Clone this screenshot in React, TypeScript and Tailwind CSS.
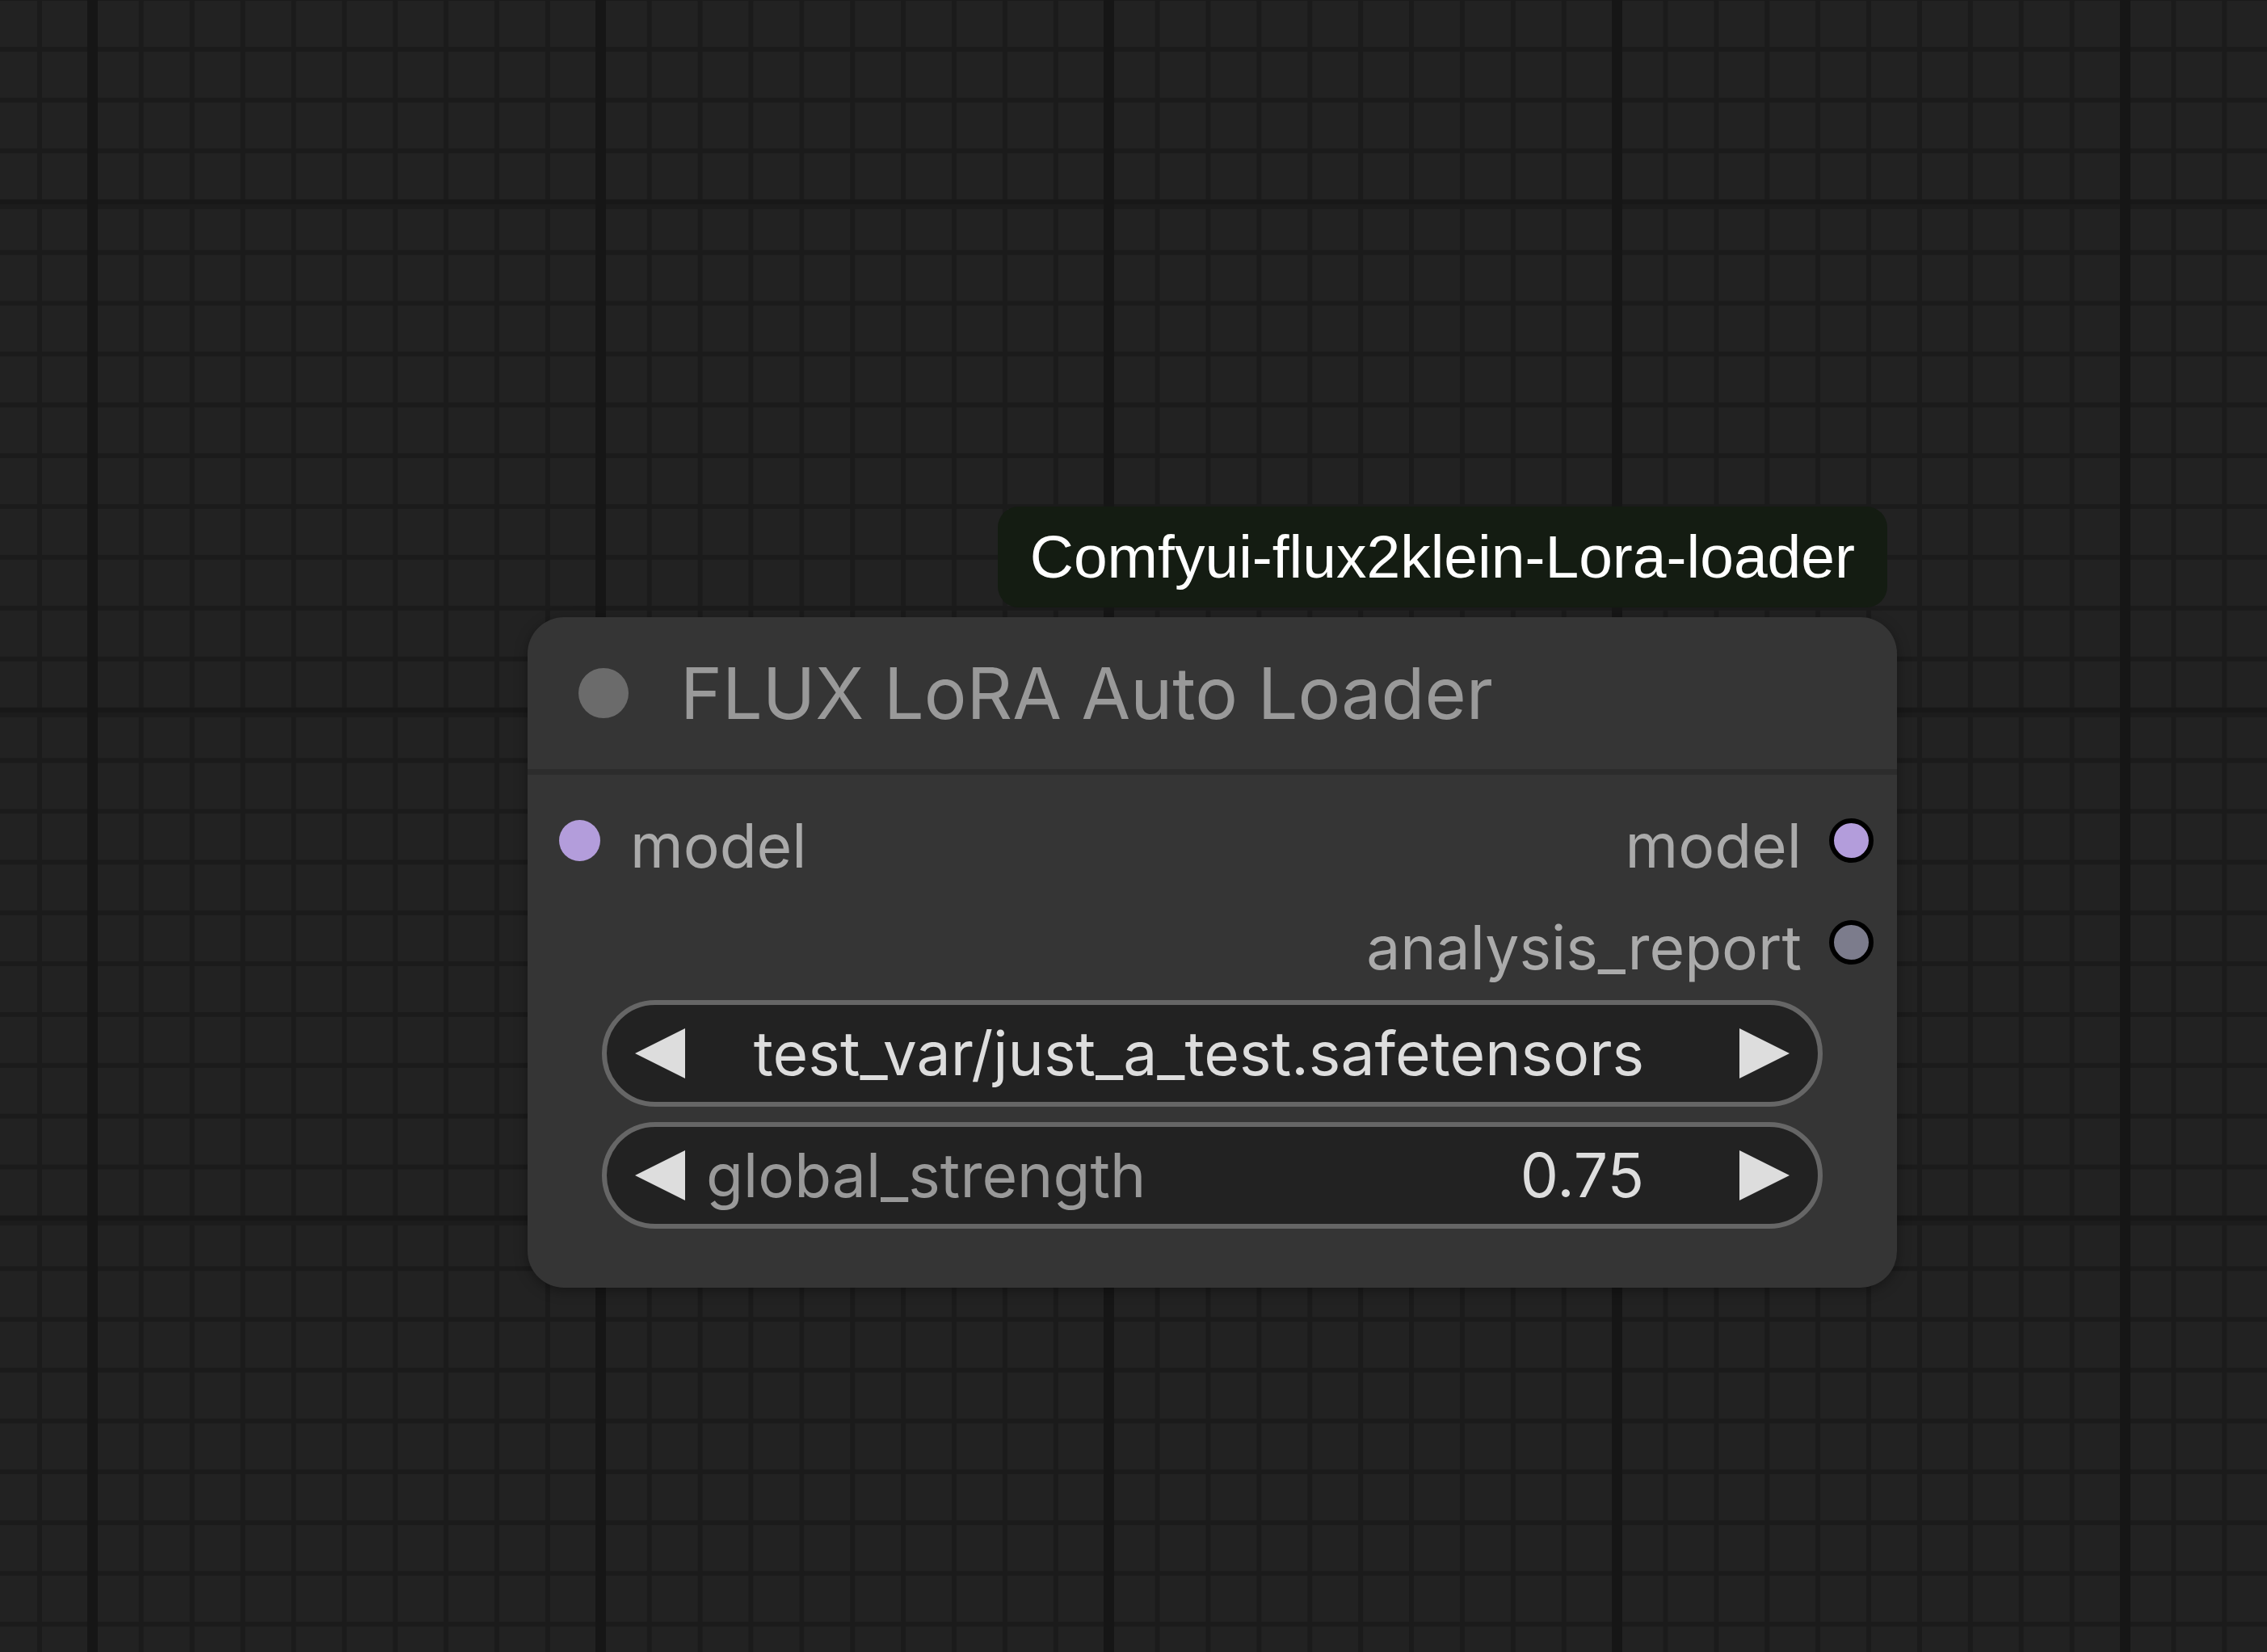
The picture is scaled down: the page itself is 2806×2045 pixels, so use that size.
import type { ReactNode } from 'react';

const inter = "font-['Inter','Noto_Sans',sans-serif]";

function Arrow({ dir }: { dir: 'left' | 'right' }) {
  return (
    <svg width="62" height="62" viewBox="0 0 62 62" className="shrink-0">
      <polygon points={dir === 'left' ? '62,0 62,62 0,31' : '0,0 0,62 62,31'} fill="#dddddd" />
    </svg>
  );
}

function Widget({ children }: { children: ReactNode }) {
  return (
    <div className="mx-[92px] flex h-[132px] items-center rounded-full border-[6px] border-[#666666] bg-[#222222] px-[35px]">
      <Arrow dir="left" />
      <div className="flex min-w-0 flex-1 items-center">{children}</div>
      <Arrow dir="right" />
    </div>
  );
}

function SlotRow({ input, output, color }: { input?: string; output: string; color: string }) {
  return (
    <div className="flex h-[126px] items-center justify-between">
      {input ? (
        <div className="flex items-center pl-[39px]">
          <span className="h-[51px] w-[51px] rounded-full bg-[#b39ddb]" />
          <span className="ml-[37px] mt-[12px] text-[75px] leading-none text-[#aaaaaa]">{input}</span>
        </div>
      ) : (
        <div />
      )}
      <div className="flex items-center pr-[29px]">
        <span className="mr-[34px] mt-[12px] text-[75px] leading-none text-[#aaaaaa]">{output}</span>
        <span className={`h-[55px] w-[55px] rounded-full border-[6px] border-black ${color}`} />
      </div>
    </div>
  );
}

export default function App() {
  return (
    <div
      className={`relative h-[2045px] w-[2806px] overflow-hidden bg-[#222222] ${inter} [background-image:linear-gradient(to_right,#161616_13px,transparent_13px),linear-gradient(to_bottom,#181818_6px,#1c1c1c_6px,#1c1c1c_12px,transparent_12px),linear-gradient(to_right,#1b1b1b_6px,transparent_6px),linear-gradient(to_bottom,#1b1b1b_6px,transparent_6px)] [background-size:629px_629px,629px_629px,62.9px_62.9px,62.9px_62.9px] [background-position:108px_0,0_247px,46px_0,0_58px]`}
    >
      {/* node placed on the canvas */}
      <div className="absolute left-[653px] top-[627px] flex w-[1695px] flex-col items-end">
        {/* source badge */}
        <div className="mb-[12px] mr-[12px] flex h-[125px] items-center rounded-[26px] bg-[#141c12] px-[40px] font-['Liberation_Sans',Arial,sans-serif] text-[75px] leading-none text-white">
          Comfyui-flux2klein-Lora-loader
        </div>

        <div className="w-full rounded-[45px] bg-[#353535] pb-[73px] shadow-[0_4px_16px_rgba(0,0,0,0.35)]">
          {/* title bar */}
          <div className="flex h-[195px] items-center border-b-[7px] border-[#2c2c2c] pl-[63px]">
            <span className="h-[62px] w-[62px] rounded-full bg-[#6b6b6b]" />
            <span className="ml-[64px] text-[88px] leading-none text-[#999999]">FLUX LoRA Auto Loader</span>
          </div>

          <div className="pt-[18px]">
            <SlotRow input="model" output="model" color="bg-[#b39ddb]" />
            <SlotRow output="analysis_report" color="bg-[#7c7c8c]" />
          </div>

          <div className="mt-[9px] flex flex-col gap-[19px]">
            <Widget>
              <span className="mr-[118px] flex-1 whitespace-nowrap text-right text-[75px] leading-[1.2] text-[#dddddd]">
                test_var/just_a_test.safetensors
              </span>
            </Widget>
            <Widget>
              <span className="ml-[26px] text-[75px] leading-[1.2] text-[#999999]">global_strength</span>
              <span className="mr-[118px] flex-1 text-right text-[75px] leading-[1.2] text-[#dddddd]">0.75</span>
            </Widget>
          </div>
        </div>
      </div>
    </div>
  );
}
